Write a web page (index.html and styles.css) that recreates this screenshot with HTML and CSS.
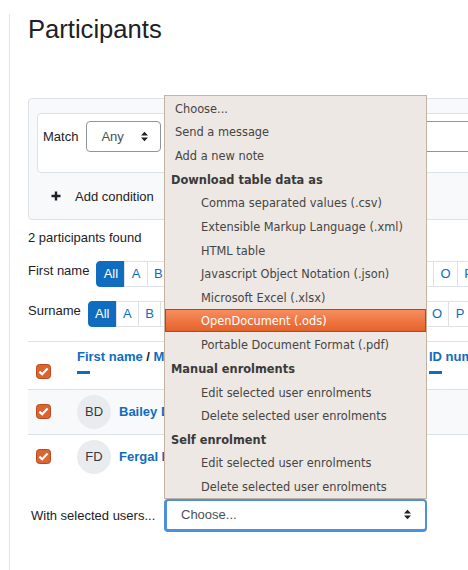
FILE: index.html
```html
<!DOCTYPE html>
<html lang="en">
  <head>
    <meta charset="UTF-8" />
    <meta name="viewport" content="width=device-width, initial-scale=1.0" />
    <title>Participants</title>
    <link rel="stylesheet" href="styles.css">
  </head>
  <body>
    <div class="main">
      <h1 class="title">Participants</h1>

      <div class="filters">
        <div class="filter-set">
          <span class="match-label">Match</span>
          <div class="select select-any">
            <span>Any</span>
            <svg class="caret" width="7" height="11" viewBox="0 0 7 11"><path d="M0 4.5 3.5 0.8 7 4.5Z M0 6.5 3.5 10.2 7 6.5Z" fill="#1d2125"/></svg>
          </div>
          <div class="text-input"></div>
        </div>
        <div class="add-condition">
          <svg width="10" height="10" viewBox="0 0 10 10"><path d="M5 0.5V9.5M0.5 5H9.5" stroke="#1d2125" stroke-width="2.4"/></svg>
          <span>Add condition</span>
        </div>
      </div>

      <p class="count">2 participants found</p>

      <div class="initials">
        <span class="initials-label">First name</span>
        <ul class="initials-bar">
          <li class="active">All</li><li>A</li><li>B</li><li>C</li><li>D</li><li>E</li><li>F</li><li>G</li><li>H</li><li>I</li><li>J</li><li>K</li><li>L</li><li>M</li><li>N</li><li>O</li><li>P</li><li>Q</li><li>R</li>
        </ul>
      </div>
      <div class="initials">
        <span class="initials-label">Surname</span>
        <ul class="initials-bar">
          <li class="active">All</li><li>A</li><li>B</li><li>C</li><li>D</li><li>E</li><li>F</li><li>G</li><li>H</li><li>I</li><li>J</li><li>K</li><li>L</li><li>M</li><li>N</li><li>O</li><li>P</li><li>Q</li><li>R</li>
        </ul>
      </div>

      <table class="participants">
        <colgroup>
          <col class="col-check" />
          <col class="col-name" />
          <col class="col-id" />
        </colgroup>
        <thead>
          <tr>
            <th class="check-head">
              <svg class="checkbox" width="15" height="15" viewBox="0 0 15 15"><rect x="0.5" y="0.5" width="14" height="14" rx="3" fill="#dd6330" stroke="#b74b1d"/><path d="M3.4 7.6 6.2 10.3 11.6 4.6" fill="none" stroke="#fff" stroke-width="2.2"/></svg>
            </th>
            <th>
              <span class="sort-link">First name</span> / <span class="sort-link">Middle name</span> / <span class="sort-link">Last name</span>
              <span class="sort-mark"></span>
            </th>
            <th>
              <span class="sort-link">ID number</span>
              <span class="sort-mark"></span>
            </th>
          </tr>
        </thead>
        <tbody>
          <tr class="striped">
            <td class="check-cell">
              <svg class="checkbox" width="15" height="15" viewBox="0 0 15 15"><rect x="0.5" y="0.5" width="14" height="14" rx="3" fill="#dd6330" stroke="#b74b1d"/><path d="M3.4 7.6 6.2 10.3 11.6 4.6" fill="none" stroke="#fff" stroke-width="2.2"/></svg>
            </td>
            <td>
              <div class="user"><span class="avatar">BD</span><span class="user-name">Bailey Dunn</span></div>
            </td>
            <td></td>
          </tr>
          <tr>
            <td class="check-cell">
              <svg class="checkbox" width="15" height="15" viewBox="0 0 15 15"><rect x="0.5" y="0.5" width="14" height="14" rx="3" fill="#dd6330" stroke="#b74b1d"/><path d="M3.4 7.6 6.2 10.3 11.6 4.6" fill="none" stroke="#fff" stroke-width="2.2"/></svg>
            </td>
            <td>
              <div class="user"><span class="avatar">FD</span><span class="user-name">Fergal Dunn</span></div>
            </td>
            <td></td>
          </tr>
        </tbody>
      </table>

      <div class="bulk">
        <span class="bulk-label">With selected users...</span>
        <div class="bulk-select">
          <div class="select select-choose">
            <span>Choose...</span>
            <svg class="caret" width="7" height="11" viewBox="0 0 7 11"><path d="M0 4.5 3.5 0.8 7 4.5Z M0 6.5 3.5 10.2 7 6.5Z" fill="#1d2125"/></svg>
          </div>
          <ul class="dropdown">
            <li class="option">Choose...</li>
            <li class="option">Send a message</li>
            <li class="option">Add a new note</li>
            <li class="group">Download table data as</li>
            <li class="option child">Comma separated values (.csv)</li>
            <li class="option child">Extensible Markup Language (.xml)</li>
            <li class="option child">HTML table</li>
            <li class="option child">Javascript Object Notation (.json)</li>
            <li class="option child">Microsoft Excel (.xlsx)</li>
            <li class="option child selected">OpenDocument (.ods)</li>
            <li class="option child">Portable Document Format (.pdf)</li>
            <li class="group">Manual enrolments</li>
            <li class="option child">Edit selected user enrolments</li>
            <li class="option child">Delete selected user enrolments</li>
            <li class="group">Self enrolment</li>
            <li class="option child">Edit selected user enrolments</li>
            <li class="option child">Delete selected user enrolments</li>
          </ul>
        </div>
      </div>
    </div>
  </body>
</html>
```

FILE: styles.css
```css
* {
  box-sizing: border-box;
}

html,
body {
  margin: 0;
  padding: 0;
  overflow: hidden;
  background: #fff;
}

body {
  font-family: "Liberation Sans", Arial, sans-serif;
  font-size: 13px;
  color: #1d2125;
}

.main {
  margin-left: 9px;
  border-left: 1px solid #e3e5e8;
  padding-left: 18px;
  min-height: 570px;
  width: 900px;
}

.title {
  margin: 14px 0 0;
  font-size: 25.6px;
  font-weight: normal;
  line-height: 1.2;
  color: #1d2125;
}

/* filter box */
.filters {
  margin-top: 53px;
  width: 640px;
  background: #f8f9fa;
  border: 1px solid #dee2e6;
  border-radius: 4px;
  padding: 14px 0 0 8px;
}

.filter-set {
  display: flex;
  align-items: center;
  background: #fff;
  border: 1px solid #dee2e6;
  border-radius: 4px;
  padding: 7px 0 20px 5px;
}

.match-label {
  margin-right: 8px;
}

.select {
  display: flex;
  align-items: center;
  justify-content: space-between;
  background: #fff;
  color: #495057;
}

.select-any {
  width: 75px;
  height: 31px;
  border: 1px solid #8f959e;
  border-radius: 4px;
  padding: 0 12px 0 14px;
}

.text-input {
  margin-left: 8px;
  width: 420px;
  height: 31px;
  border: 1px solid #8f959e;
  border-radius: 4px;
}

.add-condition {
  display: flex;
  align-items: center;
  gap: 14px;
  height: 46px;
  padding: 1px 0 0 14px;
}

.count {
  margin: 9px 0 0;
  line-height: 18px;
}

/* initials bars */
.initials {
  display: flex;
  align-items: flex-start;
  margin-top: 14px;
}

.initials-label {
  line-height: 20px;
  margin-right: 7px;
}

.initials-bar {
  display: flex;
  margin: 0;
  padding: 0;
  list-style: none;
}

.initials-bar li {
  height: 26px;
  line-height: 24px;
  padding: 0 6.3px;
  border: 1px solid #dee2e6;
  margin-left: -1px;
  color: #0f6cbf;
  background: #fff;
}

.initials-bar li:first-child {
  margin-left: 0;
  border-radius: 4px 0 0 4px;
}

.initials-bar li.active {
  background: #0f6cbf;
  border-color: #0f6cbf;
  color: #fff;
}

/* table */
.participants {
  margin-top: 14px;
  width: 640px;
  table-layout: fixed;
  border-collapse: separate;
  border-spacing: 0;
}

.col-check {
  width: 49px;
}

.col-name {
  width: 352px;
}

.participants th {
  border-top: 1px solid #dee2e6;
  padding: 7px 0 0;
  height: 48px;
  vertical-align: top;
  text-align: left;
  font-weight: bold;
  line-height: 15px;
  white-space: nowrap;
}

.participants th.check-head {
  padding: 0 0 10px 8px;
  vertical-align: bottom;
}

.checkbox {
  display: block;
}

.sort-link {
  color: #0f6cbf;
}

.sort-mark {
  display: block;
  width: 13px;
  height: 3px;
  margin-top: 7px;
  background: #0f6cbf;
}

.participants td {
  border-top: 1px solid #dee2e6;
  padding: 5px 0;
  height: 45px;
  vertical-align: middle;
}

.participants td.check-cell {
  padding-left: 8px;
}

.striped td {
  background: #f8f9fa;
}

.user {
  display: flex;
  align-items: center;
  gap: 8px;
}

.avatar {
  width: 34px;
  height: 34px;
  border-radius: 50%;
  background: #e9ecef;
  display: flex;
  align-items: center;
  justify-content: center;
  color: #343a40;
}

.user-name {
  color: #0f6cbf;
  font-weight: bold;
}

/* bulk actions */
.bulk {
  display: flex;
  align-items: center;
  margin-top: 20px;
}

.bulk-label {
  width: 136px;
  padding-left: 3px;
}

.bulk-select {
  position: relative;
  width: 263px;
}

.select-choose {
  height: 33px;
  border: 2px solid #4f91d8;
  border-left-width: 3px;
  border-bottom-width: 3px;
  border-radius: 4px;
  padding: 0 14px 0 14px;
}

.dropdown {
  position: absolute;
  left: 0;
  bottom: 100%;
  width: 100%;
  margin: 0;
  padding: 0;
  list-style: none;
  background: #ede8e3;
  border: 1px solid #c2b3a3;
  font-family: "DejaVu Sans", Verdana, sans-serif;
  font-size: 11.4px;
  color: #454545;
}

.dropdown li {
  height: 23.65px;
  padding-top: 2px;
  line-height: 23.65px;
  white-space: nowrap;
  overflow: hidden;
}

.option {
  padding-left: 10px;
}

.option.child {
  padding-left: 36px;
}

.group {
  padding-left: 6px;
  font-weight: bold;
  color: #3a3a3a;
}

.dropdown li.selected {
  background: linear-gradient(#f88d5e, #e4622b);
  border: 1px solid #aa4a21;
  padding-top: 1px;
  line-height: 21.65px;
  padding-left: 35px;
  color: #fff;
}
```
